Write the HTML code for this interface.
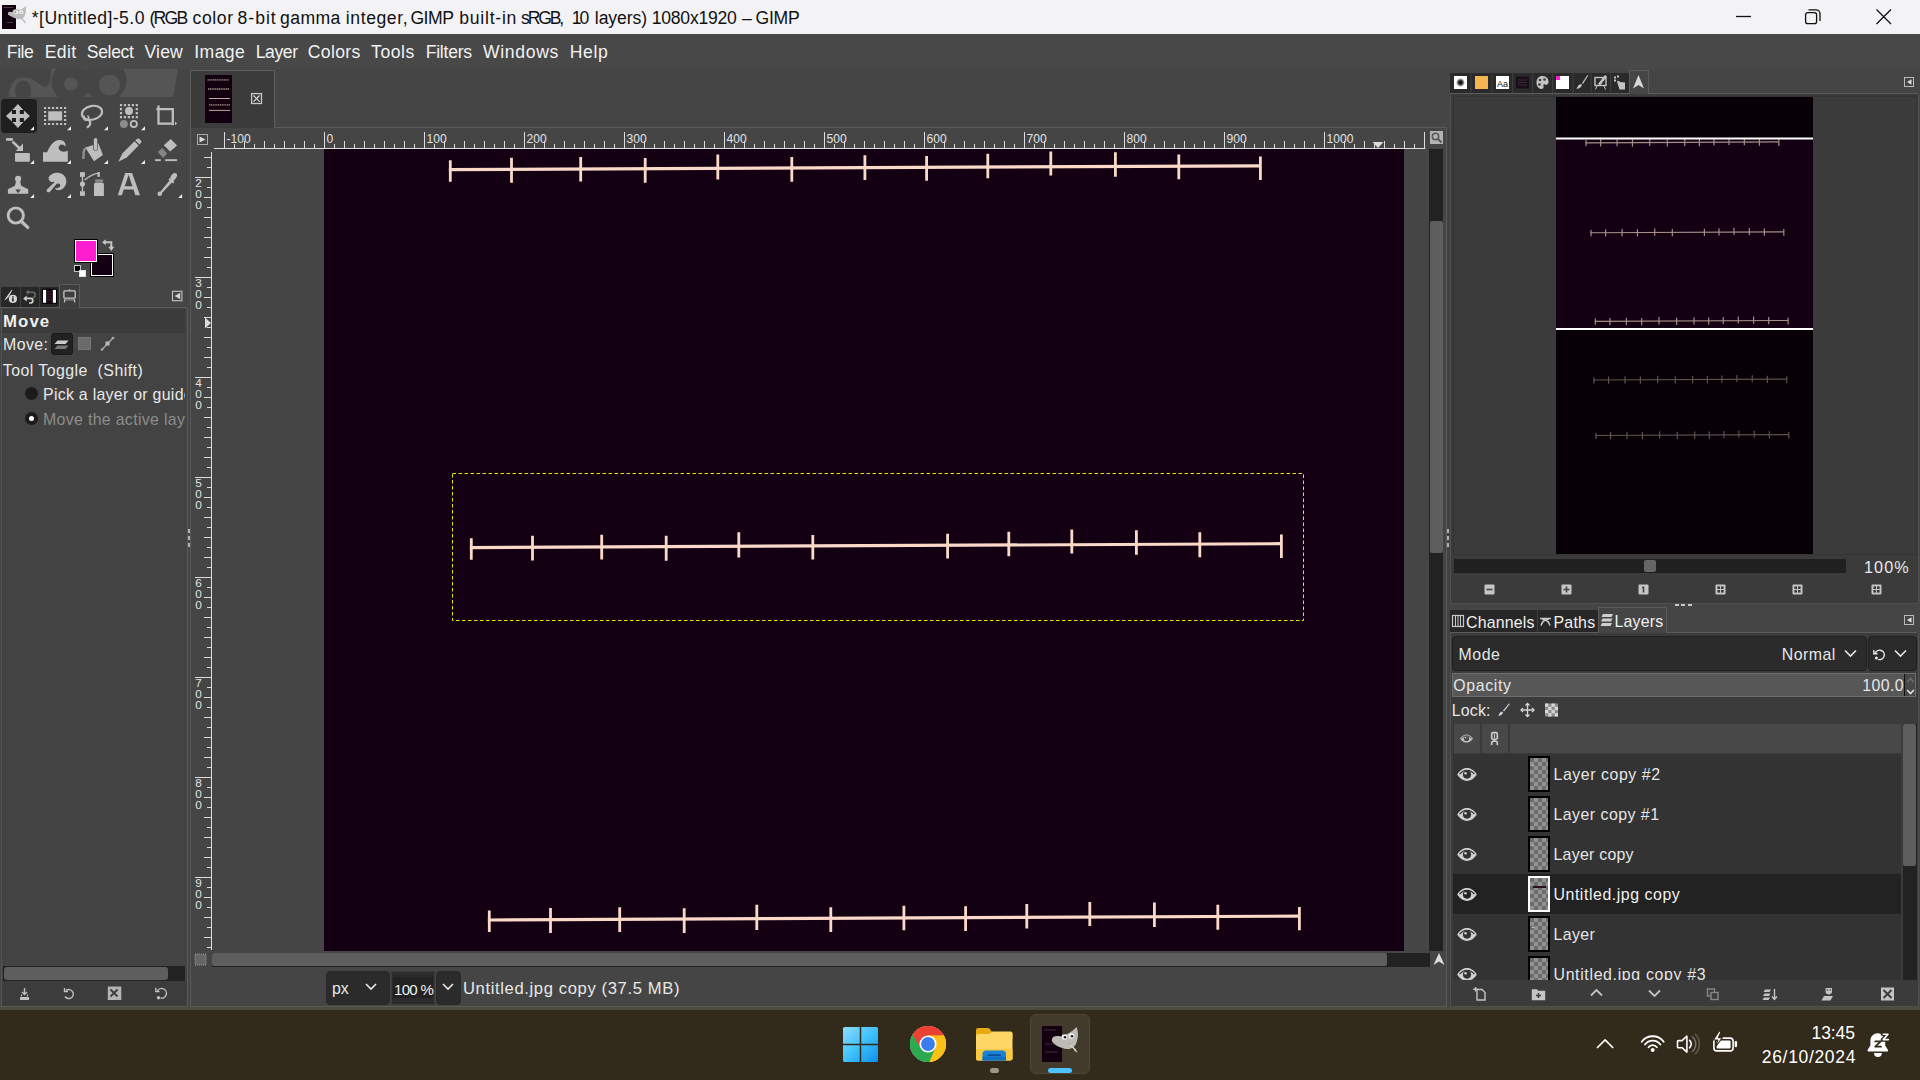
<!DOCTYPE html>
<html lang="en">
<head>
<meta charset="utf-8">
<title>GIMP</title>
<style>
*{box-sizing:border-box;margin:0;padding:0}
html,body{width:1920px;height:1080px;overflow:hidden;background:#454545}
body{position:relative;font-family:"Liberation Sans",sans-serif;color:#e4e4e4;font-size:16.5px}
.a{position:absolute}
.t{position:absolute;white-space:nowrap;line-height:1;margin-top:.9px}
svg{position:absolute;overflow:visible}
#titlebar{left:0;top:0;width:1920px;height:34px;background:#f3f3f6}
#menubar{left:0;top:34px;width:1920px;height:34.6px;background:#484848}
#menubar .t{top:9.6px;font-size:17.6px;color:#f2f2f2}
#taskbar{left:0;top:1010px;width:1920px;height:70px;background:#322a1a}
#gimpbottom{left:0;top:1008px;width:1920px;height:2px;background:#555}
.tabt{font-size:15.9px;color:#f0f0f0}
.lt{font-size:15.9px;color:#e6e6e6}
.thumb{width:22px;height:36px;border:2px solid #000;background-color:#6c6c6c;background-image:conic-gradient(#929292 25%,#6c6c6c 0 50%,#929292 0 75%,#6c6c6c 0);background-size:8px 8px;background-position:0 0}
.tw{position:absolute;top:0;white-space:pre}
</style>
</head>
<body>
<div id="titlebar" class="a">
  <div class="a" style="left:2px;top:5px;width:14px;height:24px;background:#120011"></div>
  <svg style="left:0;top:0" width="30" height="34" viewBox="0 0 30 34"><path d="M3.500 7.500h9.500M7 22.500h6" stroke="#5a4652" stroke-width=".8"/><path d="M8.200 12.500C9.500 11.300 11 12 12 12.300L13.500 9.800C15.500 9 18.500 9.500 20 9.800C22.500 9 24.500 7.500 25.800 5.800C26.300 9.500 26 13.500 24.300 16.800C22.500 19 19.500 19.500 17.300 19C14.500 18.300 12 17 10 15.800C8.200 15.500 7.300 13.800 8.200 12.500Z" fill="#bdbdbd"/><circle cx="16.300" cy="12.300" r="1.900" fill="#f3f3f3"/><circle cx="21.300" cy="12.300" r="2" fill="#f3f3f3"/><circle cx="15.600" cy="12.300" r=".8" fill="#777"/><circle cx="21.600" cy="12.800" r=".7" fill="#999"/><path d="M20.300 17.300L25.600 22.800" stroke="#bdbdbd" stroke-width="1.500"/></svg>
  <div class="t" id="titletext" style="left:0;top:9px;font-size:17.6px;color:#111"><span class="tw" id="tw1" style="letter-spacing:0.430px;left:31.8px">*[Untitled]-5.0 </span><span class="tw" id="tw2" style="letter-spacing:-1.791px;left:149.5px">(RGB </span><span class="tw" id="tw3" style="letter-spacing:0.568px;left:192.6px">color </span><span class="tw" id="tw4" style="letter-spacing:0.994px;left:237.5px">8-bit </span><span class="tw" id="tw5" style="letter-spacing:0.360px;left:280.1px">gamma </span><span class="tw" id="tw6" style="letter-spacing:0.585px;left:345.8px">integer, </span><span class="tw" id="tw7" style="letter-spacing:-0.481px;left:410.4px">GIMP </span><span class="tw" id="tw8" style="letter-spacing:0.769px;left:459.2px">built-in </span><span class="tw" id="tw9" style="letter-spacing:-2.200px;left:521.1px">sRGB, </span><span class="tw" id="tw10" style="letter-spacing:-2.166px;left:571.8px">10 </span><span class="tw" id="tw11" style="letter-spacing:-0.064px;left:594.8px">layers) </span><span class="tw" id="tw12" style="letter-spacing:-0.233px;left:651.7px">1080x1920 </span><span class="tw" id="tw13" style="letter-spacing:0.000px;left:742.0px">– </span><span class="tw" id="tw14" style="letter-spacing:-0.286px;left:755.6px">GIMP</span></div>
  <svg style="left:1736px;top:9px" width="160" height="16" viewBox="0 0 160 16" fill="none" stroke="#111" stroke-width="1.3">
    <path d="M0 7.5H15"/>
    <rect x="69.6" y="3.6" width="11" height="11" rx="2.2"/>
    <path d="M72.5 0.8H80a4 4 0 0 1 4 4V12"/>
    <path d="M140.5 0.5L155 15M155 0.5L140.5 15"/>
  </svg>
</div>
<div id="menubar" class="a">
  <div class="t" id="m1" style="letter-spacing:-0.416px;left:6.8px">File</div>
  <div class="t" id="m2" style="letter-spacing:0.328px;left:44.8px">Edit</div>
  <div class="t" id="m3" style="letter-spacing:-0.359px;left:86.8px">Select</div>
  <div class="t" id="m4" style="letter-spacing:0.161px;left:144.5px">View</div>
  <div class="t" id="m5" style="letter-spacing:0.401px;left:194.3px">Image</div>
  <div class="t" id="m6" style="letter-spacing:-0.401px;left:255.7px">Layer</div>
  <div class="t" id="m7" style="letter-spacing:0.374px;left:307.7px">Colors</div>
  <div class="t" id="m8" style="letter-spacing:0.583px;left:371.0px">Tools</div>
  <div class="t" id="m9" style="letter-spacing:-0.249px;left:425.7px">Filters</div>
  <div class="t" id="m10" style="letter-spacing:0.673px;left:483.0px">Windows</div>
  <div class="t" id="m11" style="letter-spacing:0.642px;left:569.7px">Help</div>
</div>
<div id="toolbox" class="a" style="left:0;top:70px;width:187px;height:938px;background:#454545">
  <!-- wilber header -->
  <svg style="left:0;top:-1px" width="187" height="28" viewBox="0 69 187 28">
    <defs><clipPath id="wc"><rect x="0" y="69" width="187" height="28"/></clipPath></defs>
    <g clip-path="url(#wc)">
    <path d="M51 69H178L173 97H9C9 85 14 77.500 24 77.500C34 77.500 39 85 45 87C51 85 51 76 51 69Z" fill="#555"/>
    <ellipse cx="23" cy="91" rx="8" ry="10.500" fill="#454545"/>
    <circle cx="71" cy="82" r="19.500" fill="#454545"/><circle cx="71" cy="84" r="6.800" fill="#555"/>
    <circle cx="105.500" cy="80.500" r="21" fill="#454545"/><circle cx="109.500" cy="85" r="10.500" fill="#555"/>
    </g>
  </svg>
  <!-- active tool bg -->
  <div class="a" style="left:.5px;top:29.200px;width:36.300px;height:33.400px;background:#1f1f1f;border-radius:4px"></div>
  
  <!-- fg/bg colours -->
  <div class="a" style="left:89.900px;top:182.900px;width:24px;height:24.100px;background:#000;border-radius:1px"></div>
  <div class="a" style="left:90.900px;top:183.900px;width:22px;height:22.100px;background:#fff"></div>
  <div class="a" style="left:92.200px;top:185.200px;width:19.400px;height:19.500px;background:#130012"></div>
  <div class="a" style="left:74px;top:169px;width:24px;height:23.800px;background:#000;border-radius:1px"></div>
  <div class="a" style="left:75px;top:170px;width:22px;height:21.800px;background:#fff"></div>
  <div class="a" style="left:76.200px;top:171.200px;width:19.600px;height:19.400px;background:#ff1dcf"></div>
  <div class="a" style="left:74px;top:195px;width:7px;height:7px;background:#000;border:1px solid #c8c8c8"></div>
  <div class="a" style="left:79px;top:199.800px;width:7.200px;height:7.200px;background:#fff;border:1px solid #e0e0e0"></div>
  <svg style="left:102px;top:169px" width="13" height="13" viewBox="102 239 13 13"><path d="M102.100 242.300L105.800 239.300V241.300H112.300V246.800H114.200L111.300 251L108.400 246.800H110.300V243.300H105.800V245.300Z" fill="#c4c4c4"/></svg>
</div>
<svg style="left:0;top:0" width="190" height="240" viewBox="0 0 190 240" fill="#bebebe"><path d="M34.1 126.2V130.2H30.1zM71 126.2V130.2H67zM108 126.2V130.2H104zM145 126.2V130.2H141zM34.1 159.9V163.9H30.1zM71 159.9V163.9H67zM108 159.9V163.9H104zM145 159.9V163.9H141zM34.1 193.9V197.9H30.1zM71 193.9V197.9H67zM182.1 193.9V197.9H178.1zM175.2 121.7L176.9 123.5L175.2 125.3z" fill="#ececec"/><path transform="translate(5.9,104)" d="M12 0L17.500 6H13.900V10.100H18V6.500L24 12L18 17.500V13.900H13.900V18H17.500L12 24L6.500 18H10.100V13.900H6V17.500L0 12L6 6.500V10.100H10.100V6H6.500Z"/><path d="M44 106.9h2.2v2.2h-2.2zM44 122.9h2.2v2.2h-2.2zM48 106.9h2.2v2.2h-2.2zM48 122.9h2.2v2.2h-2.2zM52 106.9h2.2v2.2h-2.2zM52 122.9h2.2v2.2h-2.2zM56 106.9h2.2v2.2h-2.2zM56 122.9h2.2v2.2h-2.2zM60 106.9h2.2v2.2h-2.2zM60 122.9h2.2v2.2h-2.2zM64 106.9h2.2v2.2h-2.2zM64 122.9h2.2v2.2h-2.2zM44 110.9h2.2v2.2h-2.2zM64 110.9h2.2v2.2h-2.2zM44 114.9h2.2v2.2h-2.2zM64 114.9h2.2v2.2h-2.2zM44 118.9h2.2v2.2h-2.2zM64 118.9h2.2v2.2h-2.2z"/><rect x="48.200" y="111.300" width="13.900" height="9.300"/><g fill="none" stroke="#bebebe" stroke-width="2.100"><ellipse cx="92" cy="112.800" rx="10.200" ry="6.800" transform="rotate(-12 92 112.800)"/><path d="M84.500 115.500c-2 2.200-.6 5 2 4.700 2.400-.3 3-3 1-4.500" stroke-width="1.600"/><path d="M87.500 119.300c3 1.300 4.500 5.500-.6 8.400" stroke-width="2.100"/></g><path d="M119.9 104.1h2.2v2.2h-2.2zM119.9 115.95h2.2v2.2h-2.2zM123.85 104.1h2.2v2.2h-2.2zM123.85 115.95h2.2v2.2h-2.2zM127.8 104.1h2.2v2.2h-2.2zM127.8 115.95h2.2v2.2h-2.2zM131.75 104.1h2.2v2.2h-2.2zM131.75 115.95h2.2v2.2h-2.2zM135.7 104.1h2.2v2.2h-2.2zM135.7 115.95h2.2v2.2h-2.2zM119.9 108.05h2.2v2.2h-2.2zM135.7 108.05h2.2v2.2h-2.2zM119.9 112h2.2v2.2h-2.2zM135.7 112h2.2v2.2h-2.2z"/><circle cx="129" cy="110.900" r="4"/><circle cx="123.900" cy="123.900" r="4" fill="#8a8a8a"/><circle cx="133.800" cy="123.900" r="3.100" fill="none" stroke="#bebebe" stroke-width="1.800"/><g fill="none" stroke="#bebebe" stroke-width="2.300"><path d="M158.500 105.400V123.600H171.800"/><path d="M156.400 109.100H172.800V125.200"/></g><rect x="6.100" y="138.100" width="6.800" height="2.700"/><path d="M12.500 141.600L20 148.800" stroke="#bebebe" stroke-width="2.600" fill="none"/><path d="M23 143.500V151H15.800z"/><rect x="15" y="153.100" width="14.900" height="8.700" rx="1"/><path d="M43 161.700V152.200H47C50 146 53.500 140 59.500 140c4.500 0 7 3.500 5.800 6.800-1.300-2.300-4.200-2.900-5.800-1.200-1.900 2-.6 5.300 2.600 6 2 .4 4-.2 5.700-.9V161.700z"/><path d="M85.300 147.400L98.500 143.600L102.900 154.900L94 161.300z"/><path d="M85.600 147.200c-2.700 1-3.400 2.800-3.400 11.900h2.500c0-6 .3-8.500 1.800-10.500z" fill="#8e8e8e"/><rect x="93.100" y="137.600" width="4.800" height="13.200" rx="2.400" fill="#454545"/><rect x="93.800" y="138" width="3.500" height="12.200" rx="1.750"/><path d="M118.300 161.800L122.500 153.300L134.500 141.300L138.700 145.500L126.700 157.500z"/><path d="M135.400 140.400L136.800 139Q138 137.800 139.300 139L140.900 140.600Q142.100 141.900 140.900 143.100L139.500 144.500z"/><path d="M170.700 139.100L177.100 145.500L170.200 151.400L163.800 145.300z"/><path d="M162.300 148L167.200 153.400L163.100 157.900L157.800 151.900z" fill="#868686"/><rect x="155.100" y="159.200" width="5.700" height="1.900"/><rect x="165.100" y="159.200" width="12" height="1.900"/><circle cx="18.100" cy="178.900" r="3.100"/><path d="M16.300 180.500h3.600l1.300 5.200 7 3.600v4.400H7.900v-4.400l7-3.600z"/><path d="M15.300 189.400h5.600l-2.800 3.900z" fill="#454545"/><path d="M48.500 177.500C51 172.500 58.500 171.500 63 174.500c4.500 3.300 4.500 10.500 0 14-3 2.300-7.300 2.200-8-.2 2.600.3 5.300-.8 5.300-2.800 0-1.600-1.700-2.600-3.600-1.700L50 191.800c-1.500 1.500-4.500-.2-2.800-2.600l7.800-7.500c-3 .8-5.400-.3-6-1.800-.4-1-.1-1.600-.5-2.400z"/><rect x="80" y="172.100" width="4.900" height="4.800"/><rect x="80" y="191.200" width="4.900" height="4.700"/><path d="M82.450 176.900V191.200" stroke="#bebebe" stroke-width="1.300"/><circle cx="82.450" cy="184.100" r="2.600"/><path d="M84.600 179.900C89 176.500 93 173.500 98 173.300" fill="none" stroke="#bebebe" stroke-width="1.300"/><rect x="97.500" y="172.100" width="2.300" height="4.800"/><rect x="95.200" y="179.400" width="7.900" height="2.400" fill="#8e8e8e"/><path d="M94 184.600c0-1.200.8-2 2-2h5.900c1.200 0 2 .8 2 2v11.300H94z"/><path d="M125.200 173.100h6.900l7.900 22.100h-4.700l-1.800-5.600h-9.800l-1.800 5.600h-4.100zM124.800 186.200h7.600l-3.800-11.400z"/><path d="M170.300 177.500c.8-2.800 3-4.800 5.200-4.600 1.600.2 2 1.800 1.200 3.800-.7 1.600-2 3-3.400 4.300l1.100.9-1.300 1.600-1.200-.9-10.600 11.200-1.600-1.300 9.900-11.900-1.100-.9 1.300-1.600 1.100.9z"/><circle cx="159.800" cy="193.700" r="2.300"/><circle cx="15.800" cy="215.500" r="7.600" fill="none" stroke="#bebebe" stroke-width="2.900"/><path d="M21.500 221.500L27.700 227.400" stroke="#bebebe" stroke-width="3.300" stroke-linecap="round"/></svg>
<div id="toolopts" class="a" style="left:0;top:284px;width:187px;height:724px">
  <!-- tabs -->
  <div class="a" style="left:1px;top:3px;width:58.500px;height:20px;background:#272727"></div>
  <div class="a" style="left:20px;top:3px;width:1px;height:20px;background:#3e3e3e"></div>
  <div class="a" style="left:39.300px;top:3px;width:1px;height:20px;background:#3e3e3e"></div>
  <div class="a" style="left:59.200px;top:.200px;width:20.600px;height:23.800px;background:#3e3e3e;border:1px solid #5c5c5c;border-bottom:none"></div>
  <div class="a" style="left:0;top:23px;width:60px;height:1px;background:#5c5c5c"></div>
  <div class="a" style="left:79px;top:23px;width:108px;height:1px;background:#5c5c5c"></div>
  <div class="a" style="left:1px;top:24px;width:186.500px;height:699px;background:#434343;border-right:1px solid #5a5a5a;border-left:1px solid #555"></div>
  <svg style="left:0;top:0" width="190" height="24" viewBox="0 284 190 24">
    <!-- tab1 tool options icon -->
    <path d="M4.400 300.800C5.300 298.300 6.800 296.300 8.500 294L11.700 289.800L12.400 290.300L9.800 295C8.500 297.300 6.800 299.300 4.400 300.800Z" fill="#c8c8c8"/><circle cx="12.900" cy="298.900" r="4.100" fill="#d4d4d4"/><rect x="12.100" y="298.200" width="1.600" height="3.200" fill="#272727"/><rect x="12.100" y="296.300" width="1.600" height="1.300" fill="#272727"/>
    <!-- tab2 undo history -->
    <path d="M27 292.200H32.500a2.700 2.700 0 0 1 0 5.400" fill="none" stroke="#6a6a6a" stroke-width="1.500"/><path d="M28.700 289.700L25.700 292.200L28.700 294.700Z" fill="#6a6a6a"/>
    <path d="M25.500 298.400H30.500a2.300 2.300 0 0 1 0 4.600H29" fill="none" stroke="#d0d0d0" stroke-width="1.700"/><path d="M26.700 295.400L23.200 298.400L26.700 301.400Z" fill="#d0d0d0"/>
    <!-- tab3 images -->
    <rect x="41.900" y="288.800" width="15.100" height="15.100" rx="1.200" fill="#000"/><rect x="43" y="289.900" width="13" height="12.900" fill="#1a0a1a"/><rect x="43" y="289.900" width="3.100" height="12.900" fill="#fff"/><rect x="52.900" y="289.900" width="3.100" height="12.900" fill="#fff"/><path d="M47 292h5M47 294.500h5M47 297h5M47 299.500h5" stroke="#3a2438" stroke-width=".8"/>
    <!-- tab4 device -->
    <rect x="63.900" y="290.900" width="11.300" height="7.300" rx=".8" fill="none" stroke="#c8c8c8" stroke-width="1.300"/><path d="M68.300 290.300L69.500 288.900L70.700 290.300Z" fill="#c8c8c8"/><path d="M64.500 299.900H74.600" stroke="#8a8a8a" stroke-width="1.300"/><path d="M64.800 299.300L64.300 302.300M74.300 299.300L74.800 302.300" stroke="#c8c8c8" stroke-width="1.200"/>
    <!-- menu button -->
    <rect x="172.500" y="291.300" width="9.400" height="9.400" fill="none" stroke="#c4c4c4" stroke-width="1.100"/><path d="M180.200 292.800v6.400L174.600 296z" fill="#d4d4d4"/>
  </svg>
  <!-- Move header -->
  <div class="a" style="left:2px;top:24.500px;width:183px;height:24px;background:#3b3b3b"></div>
  <div class="t" id="to1" style="letter-spacing:1.103px;left:3px;top:28.800px;font-size:16.800px;font-weight:bold;color:#f0f0f0">Move</div>
  <div class="t" id="to2" style="letter-spacing:0.407px;left:3px;top:52.4px;font-size:15.9px;color:#e8e8e8">Move:</div>
  <div class="a" style="left:50.500px;top:48.500px;width:22px;height:22px;background:#222;border-radius:3px;border:1px solid #1a1a1a"></div>
  <svg style="left:50px;top:48px" width="80" height="24" viewBox="0 0 80 24">
    <path d="M7.500 8.500h11l-3 3.500h-11z" fill="#ccc"/><path d="M7.500 13.500h11l-3 3.500h-11z" fill="#777"/>
    <rect x="28.500" y="5.500" width="12" height="12" fill="#6a6a6a" stroke="#999" stroke-width="1" stroke-dasharray="1 1"/>
    <path d="M52 17.500L63 6" stroke="#aaa" stroke-width="1.300"/><rect x="55.500" y="9.500" width="4" height="4" fill="#bbb"/><circle cx="52" cy="17.500" r="1.300" fill="#aaa"/><circle cx="63" cy="6" r="1.300" fill="#aaa"/>
  </svg>
  <div class="t" id="to3" style="letter-spacing:0.452px;left:2.8px;top:78.4px;font-size:15.9px;color:#e8e8e8">Tool Toggle&nbsp; (Shift)</div>
  <div class="a" style="left:25px;top:103px;width:13px;height:13px;border-radius:50%;background:#1b1b1b"></div>
  <div class="a" style="left:25px;top:128px;width:13px;height:13px;border-radius:50%;background:#1b1b1b"></div>
  <div class="a" style="left:29px;top:132px;width:5px;height:5px;border-radius:50%;background:#fff"></div>
  <div class="a" style="left:43px;top:98px;width:142px;height:50px;overflow:hidden">
    <div class="t" id="to4" style="letter-spacing:0.282px;left:0;top:4.1px;font-size:15.9px;color:#e8e8e8">Pick a layer or guide</div>
    <div class="t" id="to5" style="letter-spacing:0.325px;left:0;top:29px;font-size:15.9px;color:#8c8c8c">Move the active layer</div>
  </div>
  <div class="a" style="left:2px;top:697px;width:185px;height:25.500px;background:#3c3c3c"></div>
  <!-- bottom scrollbar -->
  <div class="a" style="left:3px;top:682.200px;width:182px;height:14.600px;background:#222"></div>
  <div class="a" style="left:4px;top:683.200px;width:164px;height:12.800px;background:#5e5e5e;border-radius:3px"></div>
  <svg style="left:0;top:699px" width="187" height="22" viewBox="0 0 187 22" fill="none" stroke="#c0c0c0" stroke-width="1.400">
    <path d="M24.500 5v6M22 9l2.500 2.500L27 9" /><path d="M20 15.500h9" stroke-width="3"/><path d="M21.500 13.500v-2M27.500 13.500v-2" stroke-width="1"/>
    <path d="M66 7.500a4.500 4.500 0 1 1-1 6"/><path d="M64.500 5v3.500H68" />
    <rect x="107.800" y="3.500" width="13.500" height="13.500" fill="#b4b4b4" stroke="none"/><path d="M110.500 6.500l7 7M117.500 6.500l-7 7" stroke="#3c3c3c" stroke-width="1.800"/>
    <path d="M157.300 8.300A4.800 4.800 0 1 1 160.500 15"/><path d="M155.800 4.800v3.800h3.800"/><circle cx="158.500" cy="14.800" r="1.700" fill="#c0c0c0" stroke="none"/>
  </svg>
</div>
<!-- divider between toolbox and image -->
<div class="a" style="left:190px;top:127px;width:1px;height:880px;background:#5a5a5a"></div>
<div class="a" style="left:187.800px;top:529px;width:2.200px;height:18px;background:repeating-linear-gradient(#b0b0b0 0 4px,transparent 4px 7px)"></div>
<!-- image window -->
<div class="a" style="left:192px;top:70px;width:1255px;height:938px;background:#454545"></div>
<!-- tab -->
<div class="a" style="left:190px;top:70.200px;width:85px;height:58px;background:#3b3b3b;border:1px solid #5e5e5e;border-bottom:none"></div>
<div class="a" style="left:204.900px;top:75.100px;width:27.200px;height:47.800px;background:#120011"></div>
<svg style="left:0;top:0" width="300" height="130" viewBox="0 0 300 130" fill="none"><path d="M207.600 79.900H229.100M208 89H229.100M209 104.900H230" stroke="#7f6f6a" stroke-width="1.800" stroke-dasharray="1.200 .6"/><path d="M209 98.500H230M209 110.400H230" stroke="#bfa89f" stroke-width="1"/>
<rect x="251.600" y="93.600" width="9.900" height="9.900" stroke="#c8c8c8" stroke-width="1.300"/><path d="M253.500 95.500l6.100 6.100M259.600 95.500l-6.100 6.100" stroke="#dcdcdc" stroke-width="1.100"/></svg>
<!-- frame lines -->
<div class="a" style="left:275px;top:127px;width:1172px;height:1px;background:#5a5a5a"></div>
<!-- corner button -->
<svg style="left:197px;top:134px" width="12" height="12" viewBox="0 0 12 12"><rect x=".5" y=".5" width="10" height="10" fill="none" stroke="#aaa"/><path d="M2.500 2.500v6l6-3z" fill="#ddd"/></svg>
<svg style="left:0;top:130px" width="1440" height="20" viewBox="0 0 1440 20"><path d="M214 18.5H1425.5" stroke="#dcdcdc" stroke-width="1"/><path d="M224.5 2V18M234.5 14V18M244.5 11V18M254.5 14V18M264.5 11V18M274.5 14V18M284.5 11V18M294.5 14V18M304.5 11V18M314.5 14V18M324.5 2V18M334.5 14V18M344.5 11V18M354.5 14V18M364.5 11V18M374.5 14V18M384.5 11V18M394.5 14V18M404.5 11V18M414.5 14V18M424.5 2V18M434.5 14V18M444.5 11V18M454.5 14V18M464.5 11V18M474.5 14V18M484.5 11V18M494.5 14V18M504.5 11V18M514.5 14V18M524.5 2V18M534.5 14V18M544.5 11V18M554.5 14V18M564.5 11V18M574.5 14V18M584.5 11V18M594.5 14V18M604.5 11V18M614.5 14V18M624.5 2V18M634.5 14V18M644.5 11V18M654.5 14V18M664.5 11V18M674.5 14V18M684.5 11V18M694.5 14V18M704.5 11V18M714.5 14V18M724.5 2V18M734.5 14V18M744.5 11V18M754.5 14V18M764.5 11V18M774.5 14V18M784.5 11V18M794.5 14V18M804.5 11V18M814.5 14V18M824.5 2V18M834.5 14V18M844.5 11V18M854.5 14V18M864.5 11V18M874.5 14V18M884.5 11V18M894.5 14V18M904.5 11V18M914.5 14V18M924.5 2V18M934.5 14V18M944.5 11V18M954.5 14V18M964.5 11V18M974.5 14V18M984.5 11V18M994.5 14V18M1004.5 11V18M1014.5 14V18M1024.5 2V18M1034.5 14V18M1044.5 11V18M1054.5 14V18M1064.5 11V18M1074.5 14V18M1084.5 11V18M1094.5 14V18M1104.5 11V18M1114.5 14V18M1124.5 2V18M1134.5 14V18M1144.5 11V18M1154.5 14V18M1164.5 11V18M1174.5 14V18M1184.5 11V18M1194.5 14V18M1204.5 11V18M1214.5 14V18M1224.5 2V18M1234.5 14V18M1244.5 11V18M1254.5 14V18M1264.5 11V18M1274.5 14V18M1284.5 11V18M1294.5 14V18M1304.5 11V18M1314.5 14V18M1324.5 2V18M1334.5 14V18M1344.5 11V18M1354.5 14V18M1364.5 11V18M1374.5 14V18M1384.5 11V18M1394.5 14V18M1404.5 11V18M1414.5 14V18M1424.5 2V18" stroke="#dcdcdc" stroke-width="1" fill="none"/><g font-family="Liberation Sans, sans-serif" font-size="12.1" fill="#e2e2e2"><text x="226.5" y="13.4">-100</text><text x="326.5" y="13.4">0</text><text x="426.5" y="13.4">100</text><text x="526.5" y="13.4">200</text><text x="626.5" y="13.4">300</text><text x="726.5" y="13.4">400</text><text x="826.5" y="13.4">500</text><text x="926.5" y="13.4">600</text><text x="1026.5" y="13.4">700</text><text x="1126.5" y="13.4">800</text><text x="1226.5" y="13.4">900</text><text x="1326.5" y="13.4">1000</text></g><path d="M1372.5 12h11l-5.500 6z" fill="#dcdcdc"/></svg>
<svg style="left:0;top:0" width="220" height="1000" viewBox="0 0 220 1000"><path d="M211.5 152V950" stroke="#dcdcdc" stroke-width="1"/><path d="M204 157.5H211M207 167.5H211M195 177.5H211M207 187.5H211M204 197.5H211M207 207.5H211M204 217.5H211M207 227.5H211M204 237.5H211M207 247.5H211M204 257.5H211M207 267.5H211M195 277.5H211M207 287.5H211M204 297.5H211M207 307.5H211M204 317.5H211M207 327.5H211M204 337.5H211M207 347.5H211M204 357.5H211M207 367.5H211M195 377.5H211M207 387.5H211M204 397.5H211M207 407.5H211M204 417.5H211M207 427.5H211M204 437.5H211M207 447.5H211M204 457.5H211M207 467.5H211M195 477.5H211M207 487.5H211M204 497.5H211M207 507.5H211M204 517.5H211M207 527.5H211M204 537.5H211M207 547.5H211M204 557.5H211M207 567.5H211M195 577.5H211M207 587.5H211M204 597.5H211M207 607.5H211M204 617.5H211M207 627.5H211M204 637.5H211M207 647.5H211M204 657.5H211M207 667.5H211M195 677.5H211M207 687.5H211M204 697.5H211M207 707.5H211M204 717.5H211M207 727.5H211M204 737.5H211M207 747.5H211M204 757.5H211M207 767.5H211M195 777.5H211M207 787.5H211M204 797.5H211M207 807.5H211M204 817.5H211M207 827.5H211M204 837.5H211M207 847.5H211M204 857.5H211M207 867.5H211M195 877.5H211M207 887.5H211M204 897.5H211M207 907.5H211M204 917.5H211M207 927.5H211M204 937.5H211M207 947.5H211" stroke="#dcdcdc" stroke-width="1" fill="none"/><g font-family="Liberation Sans, sans-serif" font-size="11.8" fill="#e2e2e2"><text x="195.3" y="187">2</text><text x="195.3" y="198">0</text><text x="195.3" y="209">0</text><text x="195.3" y="287">3</text><text x="195.3" y="298">0</text><text x="195.3" y="309">0</text><text x="195.3" y="387">4</text><text x="195.3" y="398">0</text><text x="195.3" y="409">0</text><text x="195.3" y="487">5</text><text x="195.3" y="498">0</text><text x="195.3" y="509">0</text><text x="195.3" y="587">6</text><text x="195.3" y="598">0</text><text x="195.3" y="609">0</text><text x="195.3" y="687">7</text><text x="195.3" y="698">0</text><text x="195.3" y="709">0</text><text x="195.3" y="787">8</text><text x="195.3" y="798">0</text><text x="195.3" y="809">0</text><text x="195.3" y="887">9</text><text x="195.3" y="898">0</text><text x="195.3" y="909">0</text></g><path d="M205 317.500v11l6-5.500z" fill="#dcdcdc"/></svg>
<!-- canvas -->
<div class="a" style="left:212px;top:149px;width:1213px;height:802px;background:#454545"></div>
<div class="a" style="left:324px;top:149px;width:1080px;height:802px;background:#130012;overflow:hidden">
  <svg style="left:0;top:0" width="1080" height="802" viewBox="0 0 1080 802" fill="none">
    <path d="M124.9 20.7L936.4 16.8" stroke="#fbd9c9" stroke-width="3.2"/><path d="M126.3 11.25v21.5M187.5 8.76v24.9M256.7 7.92v24.7M321.2 8.96v24.8M393.8 5.41v25.2M467.8 8.01v24.7M540.9 6.35v24.7M602.6 6.96v24.7M663.8 4.76v24.5M726.8 2.61v24M791.4 3.25v24.5M854.8 5.44v24.9M936.4 7.6v23.4" stroke="#fbd9c9" stroke-width="2.8" fill="none"/><path d="M145.9 398.6L957.4 394.7" stroke="#fbd9c9" stroke-width="3.2"/><path d="M147.3 389.15v21.5M208.5 386.66v24.9M277.7 385.82v24.7M342.2 386.86v24.8M414.8 383.31v25.2M488.8 385.91v24.7M623.6 384.86v24.7M684.8 382.66v24.5M747.8 380.51v24M812.4 381.15v24.5M875.8 383.34v24.9M957.4 385.5v23.4" stroke="#fbd9c9" stroke-width="2.8" fill="none"/><path d="M163.9 771L975.4 767.1" stroke="#fbd9c9" stroke-width="3.2"/><path d="M165.3 761.55v21.5M226.5 759.06v24.9M295.7 758.22v24.7M360.2 759.26v24.8M432.8 755.71v25.2M506.8 758.31v24.7M579.9 756.65v24.7M641.6 757.26v24.7M702.8 755.06v24.5M765.8 752.91v24M830.4 753.55v24.5M893.8 755.74v24.9M975.4 757.9v23.4" stroke="#fbd9c9" stroke-width="2.8" fill="none"/>
    <rect x="128.500" y="324.500" width="851" height="147" stroke="#e9e900" stroke-width="1" stroke-dasharray="3.500 2.500" fill="none"/>
  </svg>
</div>
<!-- zoom corner button -->
<svg style="left:1430px;top:131px" width="14" height="14" viewBox="0 0 14 14"><rect width="13" height="13" fill="#b4b4b4"/><circle cx="5.500" cy="5.500" r="3.200" fill="none" stroke="#555" stroke-width="1.500"/><path d="M8 8l3.500 3.500" stroke="#555" stroke-width="1.800"/></svg>
<!-- v scrollbar -->
<div class="a" style="left:1429px;top:149px;width:14px;height:802px;background:#222"></div>
<div class="a" style="left:1429.500px;top:221px;width:13px;height:332px;background:#5e5e5e;border-radius:2px"></div>
<!-- h scrollbar -->
<div class="a" style="left:212px;top:952.500px;width:1218px;height:14px;background:#222"></div>
<div class="a" style="left:212px;top:953px;width:1175px;height:13px;background:#5e5e5e;border-radius:2px"></div>
<svg style="left:194px;top:953px" width="13" height="13" viewBox="0 0 13 13"><rect x="1" y="1" width="11" height="11" fill="#666" stroke="#999" stroke-dasharray="1 1"/></svg>
<svg style="left:1432px;top:952px" width="14" height="14" viewBox="0 0 14 14"><path d="M7 1l5.500 12-5.500-3.500-5.500 3.500z" fill="#ddd"/></svg>
<div class="a" style="left:190px;top:1006px;width:1257px;height:1px;background:#5a5a5a"></div>
<div class="a" style="left:0;top:1006px;width:188px;height:1px;background:#5a5a5a"></div>
<!-- status bar -->
<div class="a" style="left:325.500px;top:970.500px;width:64px;height:34px;background:#2b2b2b;border:1px solid #282828;border-radius:4px"></div>
<div class="t" id="st_px" style="letter-spacing:-0.089px;left:332px;top:980.200px;font-size:15.9px;color:#e8e8e8">px</div>
<svg style="left:365px;top:983px" width="12" height="8" viewBox="0 0 12 8" fill="none" stroke="#e8e8e8" stroke-width="1.600"><path d="M1 1l5 5 5-5"/></svg>
<div class="a" style="left:391px;top:970.500px;width:44px;height:34px;background:#2b2b2b;border:1px solid #3a3a3a"></div>
<div class="a" style="left:393px;top:977px;width:40px;height:21px;background:#222"></div>
<div class="t" id="st_zoom" style="letter-spacing:-0.687px;left:394px;top:981px;font-size:15px;color:#f0f0f0">100 %</div>
<div class="a" style="left:435.500px;top:970.500px;width:25px;height:34px;background:#2b2b2b;border:1px solid #282828;border-radius:4px"></div>
<svg style="left:442px;top:983px" width="12" height="8" viewBox="0 0 12 8" fill="none" stroke="#e8e8e8" stroke-width="1.600"><path d="M1 1l5 5 5-5"/></svg>
<div class="t" id="statustext" style="letter-spacing:0.629px;left:463px;top:980px;font-size:16.600px;color:#e8e8e8">Untitled.jpg copy (37.5 MB)</div>
<!-- divider between image and right dock -->
<div class="a" style="left:1446px;top:127px;width:3.500px;height:880px;background:#424242;border-left:1px solid #5a5a5a"></div>
<div class="a" style="left:1447px;top:529.300px;width:2px;height:18px;background:repeating-linear-gradient(#b0b0b0 0 4px,transparent 4px 7px)"></div>
<div id="rdock" class="a" style="left:1450px;top:70px;width:470px;height:938px;background:#454545">
  <!-- top tabs -->
  <div class="a" style="left:0;top:3px;width:178.500px;height:20px;background:#2a2a2a"></div>
  <div class="a" style="left:178.500px;top:0;width:20px;height:24px;background:#454545;border:1px solid #5c5c5c;border-bottom:none"></div>
          <svg style="left:0;top:2px" width="470" height="22" viewBox="0 0 470 22">
    <g stroke="#3e3e3e" stroke-width="1"><path d="M21 0v21M42 0v21M62.500 0v21M82.500 0v21M102.500 0v21M123 0v21M141 0v21M160.500 0v21"/></g>
    <defs><radialGradient id="rg"><stop offset="0" stop-color="#000"/><stop offset=".45" stop-color="#333"/><stop offset="1" stop-color="#fff"/></radialGradient></defs>
    <rect x="4" y="4" width="13" height="13" fill="#fff"/><circle cx="10.500" cy="10.500" r="4.500" fill="url(#rg)"/>
    <rect x="25" y="4" width="13" height="13" fill="#f7b552"/>
    <rect x="46" y="4" width="13" height="13" fill="#fff"/><text x="47" y="14.500" font-family="Liberation Sans, sans-serif" font-size="9" fill="#111">Aa</text>
    <rect x="66" y="4.500" width="13" height="12" fill="#1a0d1a"/><path d="M68 8h9M68 10.500h9M68 13h9" stroke="#3a2a3a" stroke-width="1"/>
    <path d="M92.500 4c4 0 6.500 3 6 6.500-.4 2.500-2.500 2.500-3.500 2-1.200-.6-2 .5-1.500 1.800.6 1.600-.5 2.700-2 2.700-3 0-5-3-5-6.500 0-4 2.500-6.500 6-6.500z" fill="#c4c4c4"/><circle cx="90" cy="8" r="1.300" fill="#3a3a3a"/><circle cx="94.500" cy="7.500" r="1.300" fill="#3a3a3a"/><circle cx="89.500" cy="12.500" r="1.300" fill="#3a3a3a"/>
    <rect x="106" y="4" width="13" height="13" fill="#fff"/><rect x="106" y="4" width="4" height="4" fill="#ff1dce"/>
    <path d="M126.500 17c1-3 2.500-4.500 4.500-5l1 1c-.8 2.200-2.500 3.500-5.500 4zM132 11l5.500-8 .8.600L133 12z" fill="#c4c4c4"/>
    <rect x="145" y="5.500" width="11" height="8" fill="none" stroke="#c4c4c4" stroke-width="1.400"/><path d="M147 14l-1.500 3.500M154 14l1.500 3.500M148.500 12l6.500-8.500 1.500 1-6.500 8.500z" stroke="#c4c4c4" stroke-width="1" fill="#c4c4c4"/>
    <path d="M167 9.500l1-1 2 1.500 5 .5v7h-5.500z" fill="#c4c4c4"/><path d="M164 4.500h2v2h-2zM167 3.500h2v2h-2zM164 7.500h2v2h-2z" fill="#c4c4c4"/>
    <path d="M188.500 3l5.500 13.500-5.500-3.500-5.500 3.500z" fill="#d8d8d8"/>
    <rect x="454.500" y="5.500" width="9" height="9" fill="none" stroke="#bbb" stroke-width="1"/><path d="M461.500 7.300v5.400L457 10z" fill="#ddd"/>
  </svg>
  <!-- navigation preview -->
  <div class="a" style="left:-.500px;top:23.500px;width:469.500px;height:510px;background:#3b3b3b;border:1px solid #505050;border-top:none"></div>
  <div class="a" style="left:2.500px;top:25.500px;width:464px;height:459px;background:#3b3b3b;border:1px solid #333"></div>
  <div class="a" style="left:106px;top:26.500px;width:257px;height:457.500px;background:#080007;overflow:hidden">
    <div class="a" style="left:0;top:41px;width:257px;height:191px;background:#130012"></div>
    <svg style="left:0;top:0" width="257" height="457" viewBox="0 0 257 457" fill="none">
      <path d="M29.46 45.86L222.83 44.93" stroke="#a58f86" stroke-width="1.19"/><path d="M30.05 43.03v6.26M44.62 42.35v7.26M61.09 42.16v7.2M76.43 42.4v7.23M93.71 41.54v7.34M111.32 42.18v7.2M128.71 41.78v7.2M143.4 41.93v7.2M157.96 41.41v7.14M172.95 40.91v6.99M188.32 41.05v7.14M203.41 41.56v7.26M222.83 42.11v6.82" stroke="#a58f86" stroke-width="1.19" fill="none"/><path d="M34.46 135.78L227.83 134.85" stroke="#a58f86" stroke-width="1.19"/><path d="M35.05 132.96v6.26M49.62 132.27v7.26M66.08 132.08v7.2M81.43 132.33v7.23M98.71 131.47v7.34M116.32 132.1v7.2M148.39 131.85v7.2M162.96 131.33v7.14M177.95 130.84v6.99M193.32 130.97v7.14M208.41 131.49v7.26M227.83 132.04v6.82" stroke="#a58f86" stroke-width="1.19" fill="none"/><path d="M38.74 224.4L232.11 223.47" stroke="#a58f86" stroke-width="1.19"/><path d="M39.34 221.58v6.26M53.9 220.89v7.26M70.37 220.7v7.2M85.71 220.94v7.23M102.99 220.09v7.34M120.6 220.72v7.2M137.99 220.33v7.2M152.68 220.47v7.2M167.24 219.95v7.14M182.23 219.45v6.99M197.6 219.59v7.14M212.69 220.1v7.26M232.11 220.66v6.82" stroke="#a58f86" stroke-width="1.19" fill="none"/><path d="M37.41 283L230.77 282.07" stroke="#5f524d" stroke-width="1.19"/><path d="M38 280.18v6.26M52.56 279.49v7.26M69.03 279.3v7.2M84.38 279.54v7.23M101.66 278.69v7.34M119.26 279.32v7.2M136.66 278.93v7.2M151.34 279.07v7.2M165.91 278.55v7.14M180.9 278.05v6.99M196.27 278.19v7.14M211.36 278.7v7.26M230.77 279.26v6.82" stroke="#5f524d" stroke-width="1.19" fill="none"/><path d="M39.41 338.5L232.77 337.57" stroke="#5f524d" stroke-width="1.19"/><path d="M40 335.68v6.26M54.56 334.99v7.26M71.03 334.8v7.2M86.38 335.04v7.23M103.66 334.19v7.34M121.26 334.82v7.2M138.66 334.43v7.2M153.34 334.57v7.2M167.91 334.05v7.14M182.9 333.55v6.99M198.27 333.69v7.14M213.36 334.2v7.26M232.77 334.76v6.82" stroke="#5f524d" stroke-width="1.19" fill="none"/>
      <path d="M0 41.500h257M0 232h257" stroke="#fff" stroke-width="2"/>
    </svg>
  </div>
  <div class="a" style="left:0;top:23px;width:179px;height:1px;background:#5c5c5c"></div>
  <div class="a" style="left:198px;top:23px;width:269px;height:1px;background:#5c5c5c"></div>
  <!-- zoom slider -->
  <div class="a" style="left:4px;top:489.200px;width:392px;height:13.600px;background:#202020"></div>
  <div class="a" style="left:194px;top:490px;width:12px;height:12px;background:#666;border-radius:2px"></div>
  <div class="t" id="navzoom" style="letter-spacing:1.113px;left:414px;top:488.400px;font-size:16.200px;color:#e8e8e8">100%</div>
  <svg style="left:0;top:513px" width="470" height="14" viewBox="0 0 470 14">
    <g fill="#c6c6c6"><rect x="34.500" y="1.500" width="10" height="10" rx="1"/><rect x="111.500" y="1.500" width="10" height="10" rx="1"/><rect x="188.500" y="1.500" width="10" height="10" rx="1"/><rect x="265.500" y="1.500" width="10" height="10" rx="1"/><rect x="342.500" y="1.500" width="10" height="10" rx="1"/><rect x="421.500" y="1.500" width="10" height="10" rx="1"/></g>
    <g stroke="#454545" stroke-width="1.600" fill="none"><path d="M36.500 6.500h6"/><path d="M113.500 6.500h6M116.500 3.500v6"/><path d="M193.500 3.500v6M192 4.500h1.500"/>
    <rect x="267.4" y="3.4" width="2.600" height="2.600" fill="#3b3b3b" stroke="none"/><rect x="267.4" y="7.0" width="2.600" height="2.600" fill="#3b3b3b" stroke="none"/><rect x="271.0" y="3.4" width="2.600" height="2.600" fill="#3b3b3b" stroke="none"/><rect x="271.0" y="7.0" width="2.600" height="2.600" fill="#3b3b3b" stroke="none"/><rect x="344.4" y="3.4" width="2.600" height="2.600" fill="#3b3b3b" stroke="none"/><rect x="344.4" y="7.0" width="2.600" height="2.600" fill="#3b3b3b" stroke="none"/><rect x="348.0" y="3.4" width="2.600" height="2.600" fill="#3b3b3b" stroke="none"/><rect x="348.0" y="7.0" width="2.600" height="2.600" fill="#3b3b3b" stroke="none"/><rect x="423.4" y="3.4" width="2.600" height="2.600" fill="#3b3b3b" stroke="none"/><rect x="423.4" y="7.0" width="2.600" height="2.600" fill="#3b3b3b" stroke="none"/><rect x="427.0" y="3.4" width="2.600" height="2.600" fill="#3b3b3b" stroke="none"/><rect x="427.0" y="7.0" width="2.600" height="2.600" fill="#3b3b3b" stroke="none"/></g>
  </svg>
  <div class="a" style="left:225px;top:533.800px;width:17px;height:2px;background:repeating-linear-gradient(90deg,#c8c8c8 0 4px,transparent 4px 6.500px)"></div>
</div>
<div id="ldock" class="a" style="left:1450px;top:606px;width:470px;height:402px">
  <div class="a" style="left:-.500px;top:27px;width:469.500px;height:374px;background:#3b3b3b;border:1px solid #505050;border-top:none"></div>
  <!-- tabs -->
  <div class="a" style="left:0;top:3.500px;width:148px;height:23px;background:#272727"></div>
  <div class="a" style="left:87px;top:3.500px;width:1px;height:23px;background:#3e3e3e"></div>
  <div class="a" style="left:147.500px;top:1px;width:69.500px;height:26px;background:#454545;border:1px solid #5c5c5c;border-bottom:none"></div>
  <div class="a" style="left:0;top:26px;width:148px;height:1px;background:#5c5c5c"></div>
  <div class="a" style="left:217px;top:26px;width:250px;height:1px;background:#5c5c5c"></div>
        <svg style="left:0;top:0" width="470" height="30" viewBox="0 0 470 30">
    <rect x="2.500" y="9.500" width="11" height="11" fill="none" stroke="#c8c8c8" stroke-width="1.200"/><path d="M5.500 10v10M8 10v10M10.500 10v10" stroke="#c8c8c8" stroke-width="1"/>
    <path d="M90 12.500h11M92 12c1 3 6 3 7.500 0M91 19.500c1-3 3-5 4.500-5.500 1.500.5 3.500 2.500 4.500 5.500" fill="none" stroke="#c8c8c8" stroke-width="1.500"/>
    <path d="M153 8h10l-1.500 3h-10zM152.500 12.500h10l-1.500 3h-10zM152 17h10l-1.500 3h-10z" fill="#d0d0d0"/>
    <rect x="454.500" y="9.500" width="9" height="9" fill="none" stroke="#bbb" stroke-width="1"/><path d="M461.500 11.300v5.400L457 14z" fill="#ddd"/>
  </svg>
  <div class="t tabt" id="lt_ch" style="letter-spacing:0.195px;left:16px;top:8px">Channels</div>
  <div class="t tabt" id="lt_pa" style="letter-spacing:0.254px;left:103.500px;top:8px">Paths</div>
  <div class="t tabt" id="lt_la" style="letter-spacing:0.221px;left:164.500px;top:7px">Layers</div>
  <!-- mode -->
  <div class="a" style="left:2px;top:30px;width:414.500px;height:34.500px;background:#2b2b2b;border:1px solid #1e1e1e;border-radius:4px"></div>
  <div class="a" style="left:418px;top:30px;width:48.700px;height:34.500px;background:#2b2b2b;border:1px solid #1e1e1e;border-radius:4px"></div>
  <div class="t lt" id="lt_mode" style="letter-spacing:0.553px;left:8.500px;top:40.100px">Mode</div>
  <div class="t lt" id="lt_normal" style="letter-spacing:0.498px;left:331.700px;top:40.100px">Normal</div>
  <svg style="left:394px;top:43px" width="70" height="12" viewBox="0 0 70 12" fill="none" stroke="#e8e8e8" stroke-width="1.600"><path d="M1 1.500l5.500 5.500 5.500-5.500"/><path d="M51 1.500l5.500 5.500 5.500-5.500"/>
   <path d="M31.200 4.200A4.700 4.700 0 1 1 34.200 10.400" stroke-width="1.400"/><path d="M29.800 1v3.700h3.700" stroke-width="1.400"/><circle cx="32.400" cy="9" r="1.500" fill="#e8e8e8" stroke="none"/></svg>
  <!-- opacity -->
  <div class="a" style="left:2px;top:66.500px;width:464px;height:24px;background:#575757;border:1px solid #6e6e6e"></div>
  <div class="a" style="left:454px;top:67.500px;width:11px;height:22px;background:#484848;border-left:1px solid #111"></div>
  <svg style="left:456px;top:69px" width="10" height="20" viewBox="0 4 10 20" fill="none" stroke-width="1.600"><path d="M1.200 11.300l3.300-3.500 3.300 3.500" stroke="#6e6e6e" transform="translate(0,-0.300)"/><path d="M1.200 19l3.300 3.500 3.300-3.500" stroke="#e4e4e4" transform="translate(0,0)"/></svg>
  <div class="t lt" id="lt_op" style="letter-spacing:0.614px;left:3.300px;top:71px">Opacity</div>
  <div class="t lt" id="opval" style="letter-spacing:0.386px;left:412.300px;top:71px">100.0</div>
  <!-- lock -->
  <div class="t lt" id="lt_lock" style="letter-spacing:0.168px;left:1.800px;top:96.100px">Lock:</div>
  <svg style="left:46px;top:96px" width="66" height="16" viewBox="0 0 66 16">
    <path d="M2.500 14c.5-2.500 1.800-4 3.500-4.500l1 1C6.500 12.500 5 13.500 2.500 14zM7 8.500L13 1.500l.8.600L8 9.500z" fill="#d4d4d4"/>
    <path d="M31.500 1.500v13M25 8h13" stroke="#d4d4d4" stroke-width="1.300"/><path d="M29.500 3.500l2-2 2 2M29.500 12.500l2 2 2-2M27 6l-2 2 2 2M36 6l2 2-2 2" fill="none" stroke="#d4d4d4" stroke-width="1.300"/>
    <rect x="49" y="1.500" width="13" height="13" fill="#8c8c8c"/><path d="M49 1.500h3.250v3.250H49zM55.500 1.500h3.250v3.250h-3.250zM52.250 4.750h3.250V8h-3.250zM58.750 4.750H62V8h-3.250zM49 8h3.250v3.250H49zM55.500 8h3.250v3.250h-3.250zM52.250 11.250h3.250v3.250h-3.250zM58.750 11.250H62v3.250h-3.250z" fill="#d8d8d8"/>
  </svg>
  <!-- header row -->
  <div class="a" style="left:3px;top:117.500px;width:447.500px;height:30px;background:#3a3a3a"></div>
  <div class="a" style="left:3.500px;top:118px;width:26.500px;height:29px;background:#484848"></div>
  <div class="a" style="left:31.500px;top:118px;width:26.500px;height:29px;background:#484848"></div>
  <div class="a" style="left:59.500px;top:118px;width:391px;height:29px;background:#484848"></div>
  <svg style="left:0;top:0" width="60" height="150" viewBox="1450 606 60 150" fill="none">
    <path d="M1460.100 738.500c2-3 4.300-4.100 6.400-4.100s4.500 1.100 6.500 4.100c-2 3-4.400 4.100-6.500 4.100s-4.400-1.100-6.400-4.100z" fill="#bdbdbd"/><path d="M1461.800 738.200c1.500-1.700 3.100-2.400 4.700-2.400s3.300.7 4.800 2.400" stroke="#484848" stroke-width=".9"/><circle cx="1466.500" cy="738.500" r="2.600" fill="#484848"/><circle cx="1465.600" cy="737.600" r=".9" fill="#bdbdbd"/>
    <rect x="1491.700" y="732.600" width="5.600" height="6.700" rx="1.300" stroke="#cfcfcf" stroke-width="1.600"/><path d="M1494.500 734v4" stroke="#cfcfcf" stroke-width="1"/>
    <path d="M1491.700 745.100v-2.200q0-1.600 1.600-1.600h2.400q1.600 0 1.600 1.600v2.200" stroke="#cfcfcf" stroke-width="1.600"/><path d="M1494.500 739.500v2" stroke="#cfcfcf" stroke-width="1.400"/>
  </svg>
  <!-- list -->
  <div class="a" style="left:3px;top:147.500px;width:447.500px;height:226.500px;background:#333;overflow:hidden">
    <div class="a" style="left:0;top:120.400px;width:448px;height:40.200px;background:#222"></div>
    <svg style="left:4.2px;top:14px" width="20" height="13" viewBox="0 0 20 13" fill="none"><path d="M.2 6.500C3.200 1.800 6.800 .1 10 .1s6.800 1.700 9.800 6.400c-3 4.700-6.600 6.400-9.800 6.400S3.200 11.200 .2 6.500z" fill="#d0d0d0"/><path d="M2.600 6.200C5 3.300 7.600 2.200 10 2.200s5 1.100 7.400 4" stroke="#333" stroke-width="1.100"/><circle cx="10" cy="6.600" r="4.100" fill="#333"/><circle cx="8.500" cy="5.200" r="1.300" fill="#d0d0d0"/></svg><div class="a thumb" style="left:75px;top:2.5px;border-color:#000"></div><div class="a" style="left:79px;top:11.5px;width:2px;height:1px;background:#e8c0a8"></div><div class="t lt" id="ln0" style="letter-spacing:0.557px;left:100.500px;top:12.7px;color:#e6e6e6">Layer copy #2</div><svg style="left:4.2px;top:54px" width="20" height="13" viewBox="0 0 20 13" fill="none"><path d="M.2 6.500C3.200 1.800 6.800 .1 10 .1s6.800 1.700 9.800 6.400c-3 4.700-6.600 6.400-9.800 6.400S3.200 11.200 .2 6.500z" fill="#d0d0d0"/><path d="M2.600 6.200C5 3.300 7.600 2.200 10 2.200s5 1.100 7.400 4" stroke="#333" stroke-width="1.100"/><circle cx="10" cy="6.600" r="4.100" fill="#333"/><circle cx="8.500" cy="5.200" r="1.300" fill="#d0d0d0"/></svg><div class="a thumb" style="left:75px;top:42.5px;border-color:#000"></div><div class="a" style="left:79px;top:51.5px;width:2px;height:1px;background:#e8c0a8"></div><div class="t lt" id="ln1" style="letter-spacing:0.473px;left:100.500px;top:52.7px;color:#e6e6e6">Layer copy #1</div><svg style="left:4.2px;top:94px" width="20" height="13" viewBox="0 0 20 13" fill="none"><path d="M.2 6.500C3.200 1.800 6.800 .1 10 .1s6.800 1.700 9.800 6.400c-3 4.700-6.600 6.400-9.800 6.400S3.200 11.200 .2 6.500z" fill="#d0d0d0"/><path d="M2.600 6.200C5 3.300 7.600 2.200 10 2.200s5 1.100 7.400 4" stroke="#333" stroke-width="1.100"/><circle cx="10" cy="6.600" r="4.100" fill="#333"/><circle cx="8.500" cy="5.200" r="1.300" fill="#d0d0d0"/></svg><div class="a thumb" style="left:75px;top:82.5px;border-color:#000"></div><div class="a" style="left:79px;top:91.5px;width:2px;height:1px;background:#e8c0a8"></div><div class="t lt" id="ln2" style="letter-spacing:0.253px;left:100.500px;top:92.7px;color:#e6e6e6">Layer copy</div><svg style="left:4.2px;top:134px" width="20" height="13" viewBox="0 0 20 13" fill="none"><path d="M.2 6.500C3.200 1.800 6.800 .1 10 .1s6.800 1.700 9.800 6.400c-3 4.700-6.600 6.400-9.800 6.400S3.200 11.200 .2 6.500z" fill="#d0d0d0"/><path d="M2.600 6.200C5 3.300 7.600 2.200 10 2.200s5 1.100 7.400 4" stroke="#222" stroke-width="1.100"/><circle cx="10" cy="6.600" r="4.100" fill="#222"/><circle cx="8.500" cy="5.200" r="1.300" fill="#d0d0d0"/></svg><div class="a thumb" style="left:75px;top:122.5px;border-color:#fff"></div><div class="a" style="left:79.500px;top:132.5px;width:13px;height:1.5px;background:#2a1020"></div><div class="t lt" id="ln3" style="letter-spacing:0.548px;left:100.500px;top:132.7px;color:#f0f0f0">Untitled.jpg copy</div><svg style="left:4.2px;top:174px" width="20" height="13" viewBox="0 0 20 13" fill="none"><path d="M.2 6.500C3.200 1.800 6.800 .1 10 .1s6.800 1.700 9.800 6.400c-3 4.700-6.600 6.400-9.800 6.400S3.200 11.200 .2 6.500z" fill="#d0d0d0"/><path d="M2.600 6.200C5 3.300 7.600 2.200 10 2.200s5 1.100 7.400 4" stroke="#333" stroke-width="1.100"/><circle cx="10" cy="6.600" r="4.100" fill="#333"/><circle cx="8.500" cy="5.200" r="1.300" fill="#d0d0d0"/></svg><div class="a thumb" style="left:75px;top:162.5px;border-color:#000"></div><div class="a" style="left:79px;top:173.5px;width:2px;height:1px;background:#e8c0a8"></div><div class="t lt" id="ln4" style="letter-spacing:0.377px;left:100.500px;top:172.7px;color:#e6e6e6">Layer</div><svg style="left:4.2px;top:214px" width="20" height="13" viewBox="0 0 20 13" fill="none"><path d="M.2 6.500C3.200 1.800 6.800 .1 10 .1s6.800 1.700 9.800 6.400c-3 4.700-6.600 6.400-9.800 6.400S3.200 11.200 .2 6.500z" fill="#d0d0d0"/><path d="M2.600 6.200C5 3.300 7.600 2.200 10 2.200s5 1.100 7.400 4" stroke="#333" stroke-width="1.100"/><circle cx="10" cy="6.600" r="4.100" fill="#333"/><circle cx="8.500" cy="5.200" r="1.300" fill="#d0d0d0"/></svg><div class="a thumb" style="left:75px;top:202.5px;border-color:#000"></div><div class="t lt" id="ln5" style="letter-spacing:0.654px;left:100.500px;top:212.7px;color:#e6e6e6">Untitled.jpg copy #3</div>
  </div>
  <!-- scrollbar -->
  <div class="a" style="left:452.500px;top:117.500px;width:14px;height:256.500px;background:#222"></div>
  <div class="a" style="left:453px;top:118px;width:13px;height:142px;background:#5e5e5e;border-radius:2px"></div>
  <!-- bottom buttons -->
  <svg style="left:0;top:377px" width="470" height="22" viewBox="0 0 470 22" fill="none" stroke="#c4c4c4" stroke-width="1.400">
    <path d="M27 6.500h5l3 3v7.500h-8z"/><path d="M25.500 4v4.500M23.200 6.200h4.600"/>
    <path d="M82.500 7h4l1.500 1.500h6.500v8h-12z" fill="#c4c4c4"/><path d="M88.500 10v5M86 12.500h5" stroke="#3b3b3b" stroke-width="1.500"/>
    <path d="M141 12.500l5.500-5.500 5.500 5.500" stroke-width="1.800"/>
    <path d="M199 7.500l5.500 5.500 5.500-5.500" stroke-width="1.800"/>
    <rect x="257.500" y="6" width="7" height="7" stroke="#888"/><rect x="261" y="9.500" width="7" height="7" stroke="#888" fill="#3b3b3b"/>
    <path d="M315 6.500h6l-1.500 2.500h-6zM314.500 10.500h6l-1.500 2.500h-6zM314 14.500h6l-1.500 2.500h-6z" fill="#c4c4c4" stroke="none"/><path d="M324.500 6v10M322 13.500l2.500 3 2.500-3"/>
    <path d="M374 13h9l-2.500 4.500h-9z" fill="#c4c4c4" stroke="none"/><path d="M375.500 5h6.500v3.500c0 2-1.500 3-3.200 3s-3.300-1-3.300-3z" fill="#c4c4c4" stroke="none"/><circle cx="377.300" cy="7" r=".8" fill="#3b3b3b" stroke="none"/><circle cx="380.300" cy="7" r=".8" fill="#3b3b3b" stroke="none"/>
    <rect x="431" y="4.500" width="13" height="13" fill="#c4c4c4" stroke="none"/><path d="M433.500 7l8 8M441.500 7l-8 8" stroke="#3b3b3b" stroke-width="2"/>
  </svg>
</div>
<div class="a" style="left:0;top:1007.300px;width:1920px;height:2.700px;background:#4c493f"></div>
<div id="taskbar" class="a">
  <!-- start -->
  <svg style="left:843px;top:17px" width="35" height="35" viewBox="0 0 35 35">
    <defs><linearGradient id="wg" x1="0" y1="0" x2="1" y2="1"><stop offset="0" stop-color="#8fdcfc"/><stop offset=".5" stop-color="#3fc1fb"/><stop offset="1" stop-color="#0f8fe8"/></linearGradient></defs>
    <path d="M1.500 0H16.750V16.750H0V1.500Q0 0 1.500 0ZM18.250 0H33.500Q35 0 35 1.500V16.750H18.250ZM0 18.250H16.750V35H1.500Q0 35 0 33.500ZM18.250 18.250H35V33.500Q35 35 33.500 35H18.250Z" fill="url(#wg)"/>
  </svg>
  <!-- chrome -->
  <svg style="left:910px;top:16px" width="36" height="36" viewBox="-18 -18 36 36">
    <circle r="18" fill="#fff"/>
    <path d="M0 0L-15.590 -9A18 18 0 0 1 15.590 -9Z" fill="#e94235"/>
    <path d="M0 0L15.590 -9A18 18 0 0 1 0 18Z" fill="#fbc116"/>
    <path d="M0 0L0 18A18 18 0 0 1 -15.590 -9Z" fill="#2da94f"/>
    <path d="M0 -8.500H15.800L7.400 4.200Z" fill="#fbc116"/>
    <path d="M0 -8.500H15.800A18 18 0 0 0 -15.590 -9L-7.400 4.200Z" fill="#e94235"/>
    <path d="M-7.400 4.200L-15.590 -9A18 18 0 0 0 1.500 17.900L7.400 4.200Z" fill="#2da94f"/>
    <path d="M7.400 4.200L1.500 17.900A18 18 0 0 0 15.800 -8.500L0 -8.500Z" fill="#fbc116"/>
    <circle r="8.600" fill="#fff"/><circle r="6.900" fill="#3b7ded"/>
  </svg>
  <!-- explorer -->
  <svg style="left:976px;top:17px" width="37" height="34" viewBox="0 0 37 34">
    <path d="M0 3Q0 1 2 1H11.500Q13 1 14 2.200L16 5H34.500Q36.500 5 36.500 7V12H0Z" fill="#e8a911"/>
    <path d="M0 9Q0 7 2 7H13L16.500 4.500H34.500Q36.500 4.500 36.500 6.500V31.500Q36.500 33.500 34.500 33.500H2Q0 33.500 0 31.500Z" fill="#fdd765"/>
    <path d="M0 22H36.500V31.500Q36.500 33.500 34.500 33.500H2Q0 33.500 0 31.500Z" fill="#f9c940"/>
    <path d="M6.500 33.500V27Q6.500 23.500 10 23.500H26.500Q30 23.500 30 27V33.500Z" fill="#1883d7"/>
    <path d="M6.500 33.500V29.500H30V33.500Z" fill="#1070c4"/>
    <rect x="11.500" y="27.300" width="13.500" height="1.800" rx=".9" fill="#0b4f94"/>
  </svg>
  <div class="a" style="left:990px;top:58px;width:9px;height:4.500px;border-radius:2.250px;background:#9a968c"></div>
  <!-- gimp button -->
  <div class="a" style="left:1030px;top:4px;width:60px;height:60px;border-radius:6px;background:#423b2c;border:1px solid #4c4536"></div>
  <div class="a" style="left:1042px;top:16px;width:20px;height:36px;background:#120011"></div>
  <svg style="left:1042px;top:16px" width="40" height="36" viewBox="0 0 40 36">
    <path d="M2 4h12M3 18h12M3 26h13" stroke="#4a3a46" stroke-width=".8"/>
    <path d="M10 13C11 9 17 10 20 10.500 24 9 30 6 34.500 1 37 7 36 14 33.500 19 30 23.500 24 24 20.500 22 17 21 14 19.500 12 17.500 10 16 9.500 14.500 10 13Z" fill="#bdbbb6"/>
    <circle cx="22.500" cy="11" r="2.800" fill="#f4f4f4"/><circle cx="29.500" cy="10" r="2.800" fill="#f4f4f4"/>
    <circle cx="23" cy="11.200" r="1.300" fill="#222"/><circle cx="30" cy="10.200" r="1.300" fill="#222"/>
    <path d="M27 17.500c.5 1.500 2 2 3 1.500" stroke="#444" stroke-width="1" fill="none"/>
    <path d="M27.500 18l6.500 6.500" stroke="#d8d4cc" stroke-width="1.600"/><path d="M33 23l2.500 3-.5.500-3-2z" fill="#c8c4bc"/>
  </svg>
  <div class="a" style="left:1048px;top:58px;width:24px;height:5px;border-radius:2.500px;background:#4cc2ff"></div>
  <!-- tray -->
  <svg style="left:0;top:-1010px" width="1920" height="1080" viewBox="0 0 1920 1080" fill="none" stroke="#fff" stroke-width="1.600">
    <path d="M1597.500 1047.500L1605.100 1039.900L1612.700 1047.500" stroke-width="1.700" stroke-linecap="round" stroke-linejoin="round"/>
    <!-- wifi centre (1652.7,1050) -->
    <g stroke-width="1.800" stroke-linecap="round">
    <path d="M1641.700 1041.700A13.800 13.800 0 0 1 1663.700 1041.700"/>
    <path d="M1645 1044.600A9.400 9.400 0 0 1 1660.400 1044.600"/>
    <path d="M1648.500 1047.300A5.200 5.200 0 0 1 1656.900 1047.300"/>
    </g>
    <circle cx="1652.700" cy="1049.900" r="2" fill="#fff" stroke="none"/>
    <!-- volume -->
    <path d="M1678.300 1040.600h3.700l4.900-4.400v15.900l-4.900-4.400h-3.700q-.8 0-.8-.8v-5.500q0-.8.800-.8z" stroke-width="1.600" stroke-linejoin="round"/>
    <path d="M1689.600 1040.400a5 5 0 0 1 0 7.400" stroke-width="1.600" stroke-linecap="round"/>
    <path d="M1692.400 1036.700a9.800 9.800 0 0 1 0 14.800" stroke="#7a7466" stroke-width="1.500" stroke-linecap="round"/>
    <path d="M1695.300 1034.200a14 14 0 0 1 0 19.800" stroke="#5f5a4c" stroke-width="1.500" stroke-linecap="round"/>
    <!-- battery -->
    <rect x="1713.900" y="1038.100" width="19.200" height="12.800" rx="3" stroke-width="1.600"/>
    <rect x="1716.600" y="1040.600" width="14" height="7.800" rx="1.200" fill="#fff" stroke="none"/>
    <path d="M1735.900 1042.200v3.800" stroke-width="2.400" stroke-linecap="round"/>
    <path d="M1719 1031.200L1713.400 1040H1717.800L1715.400 1047L1722.400 1037.600H1718.400L1721.200 1031.200Z" fill="#fff" stroke="#322a1a" stroke-width="1.100" stroke-linejoin="round"/>
    <!-- bell -->
    <path d="M1877.800 1033.200c4.200 0 7.400 3.300 7.400 7.600v4.600l2.700 4.300c.5.900 0 1.900-1 1.900h-18.200c-1 0-1.500-1-1-1.900l2.700-4.300v-4.600c0-4.300 3.200-7.600 7.400-7.600z" fill="#fff" stroke="none"/>
    <path d="M1874 1053.100h7.800a3.900 3.900 0 0 1-7.800 0z" fill="#fff" stroke="none"/>
    <path d="M1875.200 1041.300h5.600l-5.600 5.400h5.900" stroke="#322a1a" stroke-width="1.700" stroke-linejoin="round" stroke-linecap="round"/>
    <path d="M1882.600 1034h5.600l-5.600 5.800h6" stroke="#322a1a" stroke-width="4" stroke-linejoin="round" stroke-linecap="round"/>
    <path d="M1883.200 1034.200h4.800l-4.800 5.400h5.200" stroke="#fff" stroke-width="1.600" stroke-linejoin="round" stroke-linecap="round"/>
  </svg>
  <div class="t" id="tbtime" style="letter-spacing:-0.074px;left:1811.500px;top:14px;font-size:17.500px;color:#fff">13:45</div>
  <div class="t" id="tbdate" style="letter-spacing:0.667px;left:1761.800px;top:37.700px;font-size:17.500px;color:#fff">26/10/2024</div>
</div>
</div>
</body>
</html>
